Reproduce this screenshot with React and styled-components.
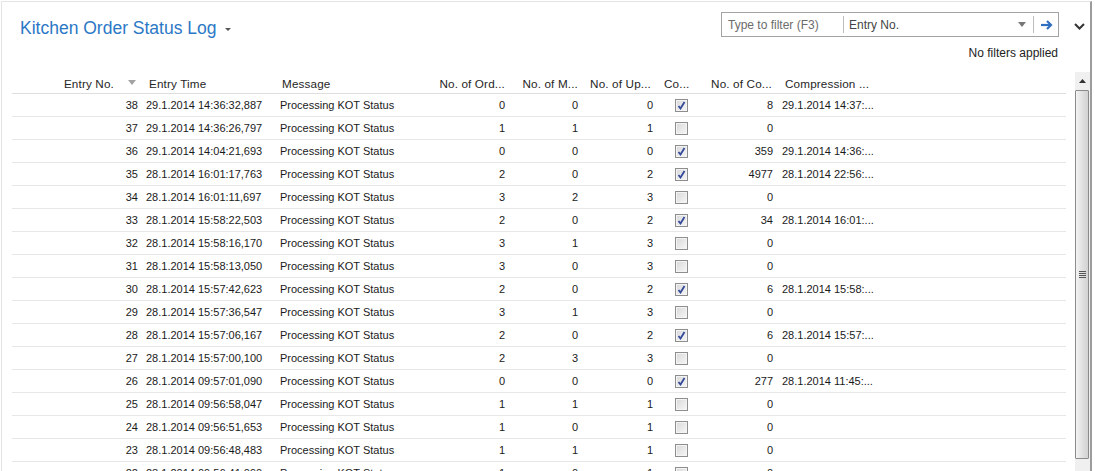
import React from "react";
import styled, { createGlobalStyle } from "styled-components";

const GlobalStyle = createGlobalStyle`
  html, body {
    margin: 0;
    padding: 0;
    background: #ffffff;
  }
  body {
    font-family: "Liberation Sans", Arial, sans-serif;
    overflow: hidden;
  }
`;

const rows = [
  [38, "29.1.2014 14:36:32,887", 0, 0, 0, true, 8, "29.1.2014 14:37:..."],
  [37, "29.1.2014 14:36:26,797", 1, 1, 1, false, 0, ""],
  [36, "29.1.2014 14:04:21,693", 0, 0, 0, true, 359, "29.1.2014 14:36:..."],
  [35, "28.1.2014 16:01:17,763", 2, 0, 2, true, 4977, "28.1.2014 22:56:..."],
  [34, "28.1.2014 16:01:11,697", 3, 2, 3, false, 0, ""],
  [33, "28.1.2014 15:58:22,503", 2, 0, 2, true, 34, "28.1.2014 16:01:..."],
  [32, "28.1.2014 15:58:16,170", 3, 1, 3, false, 0, ""],
  [31, "28.1.2014 15:58:13,050", 3, 0, 3, false, 0, ""],
  [30, "28.1.2014 15:57:42,623", 2, 0, 2, true, 6, "28.1.2014 15:58:..."],
  [29, "28.1.2014 15:57:36,547", 3, 1, 3, false, 0, ""],
  [28, "28.1.2014 15:57:06,167", 2, 0, 2, true, 6, "28.1.2014 15:57:..."],
  [27, "28.1.2014 15:57:00,100", 2, 3, 3, false, 0, ""],
  [26, "28.1.2014 09:57:01,090", 0, 0, 0, true, 277, "28.1.2014 11:45:..."],
  [25, "28.1.2014 09:56:58,047", 1, 1, 1, false, 0, ""],
  [24, "28.1.2014 09:56:51,653", 1, 0, 1, false, 0, ""],
  [23, "28.1.2014 09:56:48,483", 1, 1, 1, false, 0, ""],
  [22, "28.1.2014 09:56:41,090", 1, 0, 1, false, 0, ""],
];

const App = () => {
  return (
    <>
      <GlobalStyle />
      <Frame>
        <TopBar>
          <TitleArea>
            <Title>Kitchen Order Status Log</Title>
            <TitleCaret />
          </TitleArea>
          <FilterArea>
            <FilterBox>
              <FilterInput>Type to filter (F3)</FilterInput>
              <Divider />
              <FieldSelect>Entry No.</FieldSelect>
              <SelectCaret />
              <Divider />
              <GoButton>
                <svg width="13" height="10" viewBox="0 0 13 10">
                  <path d="M1 5 H11" stroke="#2f6fbf" strokeWidth="2.2" fill="none" />
                  <path d="M7 1 L11 5 L7 9" stroke="#2f6fbf" strokeWidth="2.2" fill="none" />
                </svg>
              </GoButton>
            </FilterBox>
            <FilterNote>No filters applied</FilterNote>
          </FilterArea>
          <ExpandButton>
            <svg width="11" height="7" viewBox="0 0 11 7">
              <path d="M1 1 L5.5 5.5 L10 1" stroke="#333" strokeWidth="2" fill="none" />
            </svg>
          </ExpandButton>
        </TopBar>
        <Body>
          <Grid>
            <HeaderRow>
              <HeadCell $w={130} $align="flex-end" $pr={6}>
                Entry No.
                <SortArrow />
              </HeadCell>
              <HeadCell $w={134} $pl={7}>Entry Time</HeadCell>
              <HeadCell $w={144} $pl={6}>Message</HeadCell>
              <HeadCell $w={89} $align="flex-end" $pr={4}>No. of Ord...</HeadCell>
              <HeadCell $w={73} $align="flex-end" $pr={4}>No. of M...</HeadCell>
              <HeadCell $w={75} $align="flex-end" $pr={6}>No. of Up...</HeadCell>
              <HeadCell $w={43} $pl={7}>Co...</HeadCell>
              <HeadCell $w={77} $align="flex-end" $pr={5}>No. of Co...</HeadCell>
              <HeadCell $pl={8}>Compression ...</HeadCell>
            </HeaderRow>
            {rows.map((r) => (
              <Row key={r[0]}>
                <Cell $w={130} $align="flex-end" $pr={4}>{r[0]}</Cell>
                <Cell $w={134} $pl={4}>{r[1]}</Cell>
                <Cell $w={144} $pl={4}>Processing KOT Status</Cell>
                <Cell $w={89} $align="flex-end" $pr={4}>{r[2]}</Cell>
                <Cell $w={73} $align="flex-end" $pr={4}>{r[3]}</Cell>
                <Cell $w={75} $align="flex-end" $pr={4}>{r[4]}</Cell>
                <Cell $w={43} $pl={18}>
                  <CheckBox>
                    {r[5] && (
                      <svg width="9" height="9" viewBox="0 0 9 9">
                        <path d="M1.5 5 L3.5 7.5 L7.5 1" stroke="#34499a" strokeWidth="1.8" fill="none" />
                      </svg>
                    )}
                  </CheckBox>
                </Cell>
                <Cell $w={77} $align="flex-end" $pr={4}>{r[6]}</Cell>
                <Cell $pl={5}>{r[7]}</Cell>
              </Row>
            ))}
          </Grid>
          <ScrollBar>
            <ScrollUp>
              <svg width="7" height="4" viewBox="0 0 7 4">
                <path d="M0 4 L3.5 0 L7 4 Z" fill="#333" />
              </svg>
            </ScrollUp>
            <ScrollThumb>
              <Grip>
                <GripLine />
                <GripLine />
                <GripLine />
                <GripLine />
              </Grip>
            </ScrollThumb>
          </ScrollBar>
        </Body>
      </Frame>
    </>
  );
};

const Frame = styled.div`
  box-sizing: border-box;
  width: 1091px;
  height: 470px;
  margin: 1px 3px 0 1px;
  border-top: 1px solid #e4e4e4;
  border-left: 1px solid #e4e4e4;
  border-right: 2px solid #9c9c9c;
  display: flex;
  flex-direction: column;
  overflow: hidden;
`;

const TopBar = styled.div`
  height: 69px;
  flex-shrink: 0;
  display: flex;
  flex-direction: row;
`;

const TitleArea = styled.div`
  flex: 1;
  display: flex;
  align-items: flex-start;
  padding: 14px 0 0 18px;
`;

const Title = styled.h1`
  margin: 0;
  font-size: 17.5px;
  line-height: 24px;
  font-weight: 400;
  color: #2b78c6;
`;

const TitleCaret = styled.div`
  width: 0;
  height: 0;
  margin: 12px 0 0 8px;
  border-left: 3px solid transparent;
  border-right: 3px solid transparent;
  border-top: 3px solid #555;
`;

const FilterArea = styled.div`
  width: 338px;
  display: flex;
  flex-direction: column;
  align-items: flex-end;
  padding-top: 10px;
`;

const FilterBox = styled.div`
  box-sizing: border-box;
  width: 338px;
  height: 25px;
  border: 1px solid #a3a3a3;
  display: flex;
  align-items: center;
  font-size: 12px;
`;

const FilterInput = styled.div`
  width: 115px;
  padding-left: 6px;
  color: #6c6c6c;
`;

const Divider = styled.div`
  width: 1px;
  height: 17px;
  background: #bdbdbd;
`;

const FieldSelect = styled.div`
  flex: 1;
  padding-left: 5px;
  color: #444;
`;

const SelectCaret = styled.div`
  width: 0;
  height: 0;
  margin-right: 7px;
  border-left: 4px solid transparent;
  border-right: 4px solid transparent;
  border-top: 5px solid #777;
`;

const GoButton = styled.div`
  width: 24px;
  display: flex;
  justify-content: center;
  align-items: center;
`;

const FilterNote = styled.div`
  margin-top: 9px;
  padding-right: 1px;
  font-size: 12px;
  line-height: 15px;
  color: #222;
`;

const ExpandButton = styled.div`
  box-sizing: border-box;
  width: 31px;
  display: flex;
  align-items: flex-start;
  padding: 21px 0 0 15px;
`;

const Body = styled.div`
  flex: 1;
  display: flex;
  flex-direction: row;
  min-height: 0;
`;

const Grid = styled.div`
  flex: 1;
  padding: 0 9px 0 10px;
  font-size: 11px;
  color: #1a1a1a;
`;

const HeaderRow = styled.div`
  height: 22px;
  display: flex;
  border-bottom: 1px solid #dedede;
  color: #262626;
  font-size: 11.7px;
`;

const Row = styled.div`
  height: 22px;
  display: flex;
  border-bottom: 1px solid #e7e7e7;
`;

const Cell = styled.div`
  box-sizing: border-box;
  ${(p) => (p.$w ? `width: ${p.$w}px; flex-shrink: 0;` : "flex: 1;")}
  display: flex;
  align-items: center;
  justify-content: ${(p) => p.$align || "flex-start"};
  padding-left: ${(p) => p.$pl || 0}px;
  padding-right: ${(p) => p.$pr || 0}px;
  white-space: nowrap;
  overflow: hidden;
`;

const HeadCell = styled(Cell)`
  padding-top: 2px;
  letter-spacing: 0.15px;
`;

const SortArrow = styled.span`
  width: 0;
  height: 0;
  margin-left: 14px;
  margin-bottom: 2px;
  border-left: 4px solid transparent;
  border-right: 4px solid transparent;
  border-top: 5px solid #a3a3a3;
`;

const CheckBox = styled.span`
  box-sizing: border-box;
  width: 13px;
  height: 13px;
  border: 1px solid #8e8e8e;
  box-shadow: inset 0 0 0 1px #f4f4f4;
  background: linear-gradient(135deg, #d8d8d8, #f7f7f7);
  display: flex;
  align-items: center;
  justify-content: center;
`;

const ScrollBar = styled.div`
  width: 15px;
  flex-shrink: 0;
  margin-top: 1px;
  background: #f0f0f0;
  display: flex;
  flex-direction: column;
`;

const ScrollUp = styled.div`
  height: 18px;
  display: flex;
  align-items: center;
  justify-content: center;
`;

const ScrollThumb = styled.div`
  box-sizing: border-box;
  height: 369px;
  margin: 0 1px 0 0;
  border: 1px solid #8b8b8b;
  border-radius: 1px;
  background: linear-gradient(90deg, #f3f3f3, #dedede 60%, #d2d2d2);
  display: flex;
  align-items: center;
  justify-content: center;
`;

const Grip = styled.div`
  display: flex;
  flex-direction: column;
  gap: 1px;
`;

const GripLine = styled.div`
  width: 7px;
  height: 1px;
  background: #555;
`;

export default App;
